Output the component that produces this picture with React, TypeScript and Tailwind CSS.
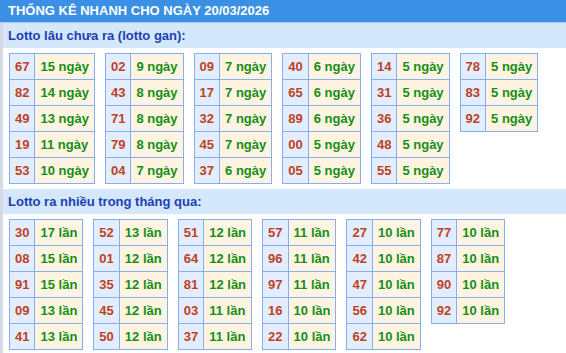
import React from "react";

type Row = [string, string];

const ganTables: Row[][] = [
  [["67", "15"], ["82", "14"], ["49", "13"], ["19", "11"], ["53", "10"]],
  [["02", "9"], ["43", "8"], ["71", "8"], ["79", "8"], ["04", "7"]],
  [["09", "7"], ["17", "7"], ["32", "7"], ["45", "7"], ["37", "6"]],
  [["40", "6"], ["65", "6"], ["89", "6"], ["00", "5"], ["05", "5"]],
  [["14", "5"], ["31", "5"], ["36", "5"], ["48", "5"], ["55", "5"]],
  [["78", "5"], ["83", "5"], ["92", "5"]],
];

const nhieuTables: Row[][] = [
  [["30", "17"], ["08", "15"], ["91", "15"], ["09", "13"], ["41", "13"]],
  [["52", "13"], ["01", "12"], ["35", "12"], ["45", "12"], ["50", "12"]],
  [["51", "12"], ["64", "12"], ["81", "12"], ["03", "11"], ["37", "11"]],
  [["57", "11"], ["96", "11"], ["97", "11"], ["16", "10"], ["22", "10"]],
  [["27", "10"], ["42", "10"], ["47", "10"], ["56", "10"], ["62", "10"]],
  [["77", "10"], ["87", "10"], ["90", "10"], ["92", "10"]],
];

const LotoTable = ({ rows, unit }: { rows: Row[]; unit: string }) => (
  <table className="border-collapse self-start">
    <tbody>
      {rows.map(([num, count]) => (
        <tr key={num} className="h-[26px]">
          <td className="border border-[#88aef2] bg-[#e2eeff] px-[5px] text-center text-[#c0401e]">
            {num}
          </td>
          <td className="border border-[#88aef2] bg-[#fff3e2] px-[5px] text-[#168f16]">
            {count} {unit}
          </td>
        </tr>
      ))}
    </tbody>
  </table>
);

const SectionTitle = ({ children }: { children: React.ReactNode }) => (
  <div className="h-[25px] bg-[#d4e7fb] pl-[5px] leading-[25px] text-[#1b3fb5]">
    {children}
  </div>
);

export default function App() {
  return (
    <div
      className="w-[566px] h-[353px] overflow-hidden bg-white text-[13px] font-bold"
      style={{ fontFamily: '"Liberation Sans", Arial, sans-serif' }}
    >
      {/* header */}
      <div className="h-[23px] bg-[#3b8fe4] pl-[8px] leading-[22px] text-white border-b border-[#a9cdf3]">
        THỐNG KÊ NHANH CHO NGÀY 20/03/2026
      </div>

      <div className="border-l-[3px] border-[#d3dae6] h-full">
        <SectionTitle>Lotto lâu chưa ra (lotto gan):</SectionTitle>
        <div className="flex gap-[10px] pl-[6px] pt-[5px] pb-[5px]">
          {ganTables.map((rows, i) => (
            <LotoTable key={i} rows={rows} unit="ngày" />
          ))}
        </div>

        <SectionTitle>Lotto ra nhiều trong tháng qua:</SectionTitle>
        <div className="flex gap-[10px] pl-[6px] pt-[5px]">
          {nhieuTables.map((rows, i) => (
            <LotoTable key={i} rows={rows} unit="lần" />
          ))}
        </div>
      </div>
    </div>
  );
}
